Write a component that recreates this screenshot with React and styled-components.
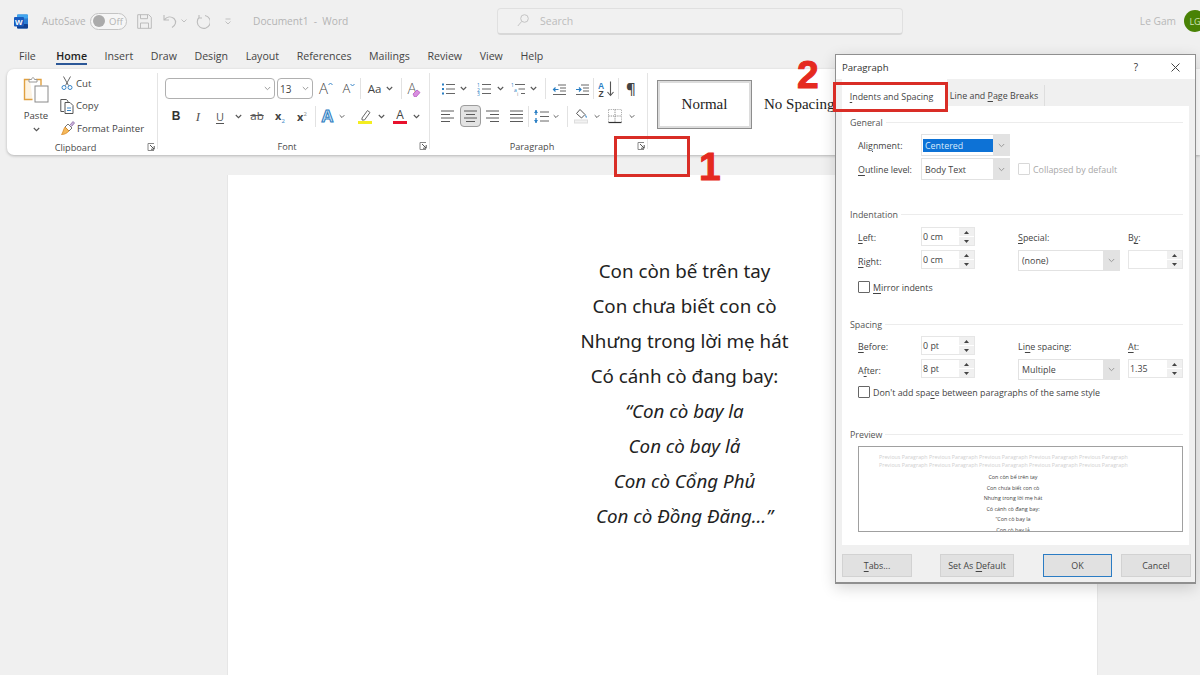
import React from "react";
import styled, { createGlobalStyle } from "styled-components";

const Global = createGlobalStyle`
  html, body { margin: 0; padding: 0; background: #f0f0f0; }
  * { box-sizing: border-box; }
`;

const UI = `"Open Sans", "Noto Sans", sans-serif`;

const Screen = styled.div`
  position: relative; width: 1200px; height: 675px; overflow: hidden;
  background: #f0f0f0; font-family: ${UI}; color: #3a3a3a;
`;

/* ---------- title bar ---------- */
const TitleBar = styled.header`
  display: flex; align-items: center; height: 42px; padding-left: 14px; color: #b4b4b4; font-size: 10px;
`;
const Logo = styled.svg`width: 14px; height: 15px; flex: none;`;
const AutoSave = styled.span`margin-left: 14px; width: 44px; white-space: nowrap;`;
const Toggle = styled.div`
  display: flex; align-items: center; gap: 4px; margin-left: 4px; width: 37px; height: 17px; flex: none;
  border: 1.5px solid #c4c4c4; border-radius: 9px; padding-left: 2px; background: #f6f6f6; font-size: 9.5px; color: #b4b4b4;
`;
const Knob = styled.i`width: 12px; height: 12px; border-radius: 50%; background: #ababab; flex: none;`;
const QIcon = styled.svg`flex: none; margin-left: ${p => p.$ml}px; width: ${p => p.$w}px; height: ${p => p.$h}px;`;
const DocTitle = styled.span`margin-left: 22px; width: 96px; flex: none; font-size: 10.2px; white-space: nowrap;`;
const SearchBox = styled.div`
  display: flex; align-items: center; gap: 11px; margin-left: 148px; width: 406px; height: 27px; flex: none;
  padding-left: 19px; background: #f1f1f1; border: 1px solid #e0e0e0; border-bottom: 2px solid #d8d8d8; border-radius: 4px;
  font-size: 10.5px; color: #bcbcbc;
`;
const UserName = styled.span`margin-left: auto; font-size: 10.2px; color: #b8b8b8;`;
const Avatar = styled.div`
  display: flex; align-items: center; justify-content: center; flex: none;
  width: 22px; height: 22px; margin: 0 -6px 0 8px; border-radius: 50%;
  background: #498205; color: #cfe3b4; font-size: 9px;
`;

/* ---------- tabs ---------- */
const TabBar = styled.nav`
  display: flex; align-items: flex-start; gap: 17.6px; height: 27px; padding: 6px 0 0 19px; font-size: 10.6px; color: #444;
`;
const MenuTab = styled.span`
  height: 17px; line-height: 16px; white-space: nowrap;
  ${p => p.$active && `margin-left: 3px; font-weight: 600; color: #222; border-bottom: 2px solid #2b5797;`}
`;

/* ---------- ribbon ---------- */
const Ribbon = styled.section`
  display: flex; height: 86px; margin-left: 7px; background: #fff; border-radius: 7px 0 0 7px;
  box-shadow: 0 1px 3px rgba(0,0,0,.25);
`;
const Group = styled.div`
  display: flex; flex-direction: column; width: ${p => p.$w}px; flex: none; padding-top: ${p => p.$pt ?? 9}px;
  position: relative;
  &::after { content: ""; position: absolute; right: 0; top: 4px; bottom: 6px; width: 1px; background: #e4e4e4; }
`;
const ToolRow = styled.div`
  display: flex; align-items: center; height: ${p => p.$h || 21}px; padding-left: ${p => p.$pl}px;
  margin-top: ${p => p.$mt || 0}px; flex: none;
`;
const GroupFoot = styled.div`
  display: flex; align-items: center; height: 18px; margin-top: auto; font-size: 9.2px; color: #4a4a4a;
`;
const GroupName = styled.span`flex: 1; text-align: center;`;
const Launcher = styled.svg`width: 14px; height: 8px; flex: none;`;
const Cell = styled.div`
  display: flex; align-items: center; justify-content: center; flex: none;
  width: ${p => p.$w}px; margin-left: ${p => p.$ml || 0}px; height: 100%;
  color: #444; font-size: ${p => p.$fs || 12}px; line-height: 1; white-space: nowrap;
`;
const Pressed = styled(Cell)`
  height: 22px; background: #e3e3e3; border: 1px solid #9c9c9c; border-radius: 4px;
`;
const Sep = styled.i`
  flex: none; width: 1px; height: 21px; background: #e2e2e2;
  margin-left: ${p => p.$ml || 0}px; margin-right: ${p => p.$mr || 0}px;
`;
const Combo = styled.div`
  display: flex; align-items: center; justify-content: space-between; flex: none;
  width: ${p => p.$w}px; height: 21px; margin-left: ${p => p.$ml || 0}px; padding: 0 3px 0 2px;
  border: 1px solid #b0b0b0; border-radius: 4px; font-size: 10px; color: #444;
`;
const ClipBody = styled.div`display: flex; flex: none;`;
const PasteCol = styled.div`
  display: flex; flex-direction: column; align-items: center; width: 50px; margin-left: 4px; padding-top: 4px;
  font-size: 9.6px; color: #444;
`;
const PasteName = styled.span`margin-top: 6px; line-height: 14px;`;
const SmallCol = styled.div`display: flex; flex-direction: column;`;
const SmallBtn = styled.div`
  display: flex; align-items: center; gap: 2px; height: 22.5px; font-size: 9.65px; color: #444; white-space: nowrap;
`;
const SmallIcon = styled.svg`width: 14px; height: 16px; flex: none; margin-left: -1px;`;
const BoldB = styled.b`font-family: "Liberation Sans", sans-serif; font-size: 12px; color: #333;`;
const ItalicI = styled.i`font-family: "Liberation Serif", serif; font-size: 13px; color: #555;`;
const UnderU = styled.span`font-size: 11px; color: #555; text-decoration: underline; text-underline-offset: 2px;`;
const Strike = styled.span`font-size: 11.5px; color: #555; text-decoration: line-through;`;
const Sub = styled.span`font-size: 11px; font-weight: 700; color: #444; position: relative;
  sub, sup { font-size: 6px; color: #3a86c8; font-weight: 400; line-height: 0; }
  sup { color: #888; }
`;
const Big = styled.span`display: flex; align-items: flex-start; font-size: ${p => p.$fs}px; line-height: 1; color: #444; font-weight: 300;
  svg { margin-top: 1px; }
`;
const ColorA = styled.span`
  display: flex; flex-direction: column; align-items: center; width: 14px; font-size: 12px; line-height: 11px; color: #444;
  &::after { content: ""; width: 14px; height: 3px; margin-top: 1px; background: ${p => p.$c}; }
`;
const TextA = styled.span`
  font-family: "Liberation Sans", sans-serif; font-weight: 700; font-size: 17px; line-height: 1;
  color: #cfe5f7; -webkit-text-stroke: 1px #2c7cc0;
`;
const Pilcrow = styled.span`font-size: 15px; font-weight: 600; color: #444;`;
const EraseA = styled.span`font-size: 15px; font-weight: 300; line-height: 1; color: #555; margin-right: -5px;`;
const StyleBody = styled.div`display: flex; align-items: flex-start; padding: 11px 0 0 9px;`;
const StyleCard = styled.div`
  display: flex; align-items: center; justify-content: center; width: 95px; height: 49px; flex: none;
  font-family: "Liberation Serif", serif; font-size: 15px; color: #222;
  border: 1px solid #8d8d8d; box-shadow: inset 0 0 0 2px #dcdcdc;
`;
const StyleName = styled.span`
  margin-left: 12px; line-height: 49px; font-family: "Liberation Serif", serif; font-size: 15px; color: #222; white-space: nowrap;
`;

/* ---------- page ---------- */
const Workspace = styled.main`padding: 20px 0 0 227px;`;
const Sheet = styled.article`
  width: 871px; height: 520px; padding: 78px 0 0 44px; background: #fff; border-left: 1px solid #e6e6e6; border-right: 1px solid #e6e6e6;
  font-family: "Noto Sans", sans-serif; font-size: 18.75px; line-height: 35px; color: #222; text-align: center;
`;
const Verse = styled.div`font-style: ${p => p.$em ? "italic" : "normal"}; white-space: nowrap;`;

/* ---------- dialog ---------- */
const Dialog = styled.aside`
  position: absolute; left: 835px; top: 54px; width: 361px; height: 530px;
  display: flex; flex-direction: column; background: #f0f0f0; border: 1px solid #8f8f8f; border-bottom-width: 2px;
  box-shadow: 0 4px 14px rgba(0,0,0,.16); font-size: 8.9px; color: #444;
`;
const DlgTitle = styled.div`
  display: flex; align-items: center; height: 24px; flex: none; padding-left: 6px; background: #fff; font-size: 9.6px; color: #333;
`;
const DlgHelp = styled.span`margin-left: auto; font-size: 10px; margin-right: 33px;`;
const DlgClose = styled.svg`width: 9px; height: 9px; margin-right: 15px; flex: none;`;
const DlgTabs = styled.div`display: flex; align-items: flex-end; height: 27px; flex: none; padding-left: 6px;`;
const DlgTab = styled.div`
  display: flex; align-items: center; justify-content: center; flex: none; height: ${p => p.$active ? 27 : 21}px; width: ${p => p.$w}px;
  padding: ${p => p.$active ? "7px 6px 0 0" : "0 3px 0 0"};
  background: ${p => p.$active ? "#fff" : "#f0f0f0"}; font-size: 8.9px; color: #444; white-space: nowrap;
  border-right: ${p => p.$active ? "none" : "1px solid #dedede"};
`;
const Panel = styled.div`
  display: flex; flex-direction: column; width: 347px; height: 439px; flex: none; margin-left: 6px; padding: 8px 6px 0 8px; background: #fff;
`;
const Legend = styled.div`
  display: flex; align-items: center; gap: 3px; height: 16px; flex: none; margin-top: ${p => p.$mt || 0}px; font-size: 8.9px; color: #555;
  &::after { content: ""; flex: 1; height: 1px; background: #ececec; }
`;
const FormRow = styled.div`
  display: flex; align-items: center; height: 22px; margin: ${p => p.$mt}px 0 0 8px; flex: none;
`;
const FieldLabel = styled.label`width: ${p => p.$w || 63}px; flex: none; white-space: nowrap;`;
const Key = styled.span`text-decoration: underline; text-underline-offset: 1.5px;`;
const Select = styled.div`
  display: flex; align-items: center; flex: none; width: ${p => p.$w}px; height: ${p => p.$h || 22}px;
  border: 1px solid #e2e2e2; padding-left: 1px; background: #fff; white-space: nowrap;
`;
const SelText = styled.span`
  flex: 1; height: 13px; line-height: 13px; padding-left: 2px;
  ${p => p.$on && `background: #0d72d6; color: #d9ebfb;`}
`;
const SelArrow = styled.span`
  display: flex; align-items: center; justify-content: center; width: 16px; height: 100%; flex: none; background: #e2e2e2;
`;
const Check = styled.i`
  width: 12px; height: 12px; flex: none; border: 1px solid ${p => p.$off ? "#d8d8d8" : "#666"}; border-radius: 1px; background: #fff;
  margin-left: ${p => p.$ml || 0}px; margin-right: 3px;
`;
const Muted = styled.span`color: #a8a8a8; white-space: nowrap;`;
const CheckRow = styled.label`
  display: flex; align-items: center; height: 12px; flex: none; margin: ${p => p.$mt}px 0 0 8px; white-space: nowrap;
`;
const FieldGrid = styled.div`
  display: grid; grid-template-columns: 63px 97px 110px 55px; grid-template-rows: 19px 21px; row-gap: 4px; align-items: center;
  margin: ${p => p.$mt}px 0 0 8px; flex: none;
  label { padding-top: 2px; }
`;
const Spin = styled.div`
  display: flex; align-self: start; width: ${p => p.$w || 54}px; height: 19px; border: 1px solid #e6e6e6; background: #fff;
`;
const SpinText = styled.span`flex: 1; padding-left: 1px; line-height: 18px;`;
const SpinBtns = styled.span`
  display: flex; flex-direction: column; width: 15px; flex: none; background: #f0f0f0;
  i { flex: 1; display: flex; align-items: center; justify-content: center; font-style: normal; }
  i + i { border-top: 1px solid #fff; }
`;
const Tri = styled.svg`width: 5px; height: 3px;`;
const PreviewBox = styled.div`
  height: 86px; margin: 4px 0 0 8px; flex: none; overflow: hidden; padding: 6px 0 0 20px; border: 1px solid #a0a0a0; background: #fff;
`;
const PrevGhost = styled.div`font-size: 5.33px; line-height: 8px; color: #cfcfcf; white-space: nowrap;`;
const PrevLines = styled.div`margin: 3px 0 0 -35px;`;
const PrevLine = styled.div`
  font-size: 5.4px; line-height: 10.5px; color: #444; text-align: center; white-space: nowrap;
`;
const DlgFoot = styled.div`display: flex; padding: 9px 0 0 6px; flex: none;`;
const DlgBtn = styled.button`
  width: ${p => p.$w}px; height: 23px; margin-left: ${p => p.$ml || 0}px; flex: none; padding: 0;
  background: #e1e1e1; border: 1px solid ${p => p.$def ? "#2b7cc4" : "#d2d2d2"};
  font-family: ${UI}; font-size: 8.9px; color: #444;
`;

/* ---------- annotations ---------- */
const RedBox = styled.div`
  position: absolute; left: ${p => p.$x}px; top: ${p => p.$y}px; width: ${p => p.$w}px; height: ${p => p.$h}px;
  border: 3px solid #d92d26;
`;
const Num = styled.span`
  position: absolute; left: ${p => p.$x}px; top: ${p => p.$y}px; font-family: "Liberation Sans", sans-serif;
  font-weight: 700; font-size: 39px; line-height: 39px; color: #e52a20; -webkit-text-stroke: 1px #e52a20;
`;

/* ---------- icons ---------- */
const Chev = ({ w = 10, ml = 0 }) => (
  <Cell $w={w} $ml={ml}>
    <svg width="7" height="5" viewBox="0 0 7 5"><path d="M.8 1l2.7 2.7L6.2 1" fill="none" stroke="#555" strokeWidth="1.1" /></svg>
  </Cell>
);
const L = ({ d, c = "#666", w = 1 }) => <path d={d} fill="none" stroke={c} strokeWidth={w} />;
const Ic = ({ w = 14, h = 14, children }) => <svg width={w} height={h} viewBox={`0 0 ${w} ${h}`}>{children}</svg>;
const Launch = () => (
  <Launcher viewBox="0 0 14 8">
    <L d="M4 .5h6M4 .5v7h6" c="#888" />
    <L d="M6 2l4 4M10.2 3v3.2H7" c="#555" />
  </Launcher>
);
const Bullets = () => (
  <Ic><g fill="#2a7fc4"><rect x="1" y="1.5" width="2" height="2" /><rect x="1" y="6" width="2" height="2" /><rect x="1" y="10.5" width="2" height="2" /></g><L d="M5 2.5h9M5 7h9M5 11.5h9" /></Ic>
);
const Numbers = () => (
  <Ic><text x="0" y="5" fontSize="5" fill="#2a7fc4">1</text><text x="0" y="10" fontSize="5" fill="#2a7fc4">2</text><text x="0" y="14" fontSize="5" fill="#2a7fc4">3</text><L d="M5 2.5h9M5 7h9M5 11.5h9" /></Ic>
);
const Multi = () => (
  <Ic><text x="0" y="5" fontSize="5" fill="#2a7fc4">1</text><text x="3" y="10" fontSize="5" fill="#2a7fc4">a</text><text x="6" y="14" fontSize="5" fill="#888">i</text><L d="M4 2.5h10M7.5 7H14M10 11.5h4" /></Ic>
);
const Indent = ({ flip }) => (
  <Ic><L d="M6 3h8M8 6h6M8 9h6M1 12.5h13" /><L d={flip ? "M1 7.5h5M4 5.5l2 2-2 2" : "M1.5 7.5h5M3.5 5.5l-2 2 2 2"} c="#2a7fc4" w="1.2" /></Ic>
);
const Align = ({ k }) => {
  const rows = { l: ["M1 2h13", "M1 5.5h9", "M1 9h13", "M1 12.5h9"], c: ["M1 2h13", "M3 5.5h9", "M1 9h13", "M3 12.5h9"], r: ["M1 2h13", "M5 5.5h9", "M1 9h13", "M5 12.5h9"], j: ["M1 2h13", "M1 5.5h13", "M1 9h13", "M1 12.5h13"] }[k];
  return <Ic w={15}><L d={rows.join("")} c="#5a5a5a" /></Ic>;
};
const LineSpacing = () => (
  <Ic w={16}><L d="M7 3h9M7 7.5h9M7 12h9" /><L d="M3 1v5M3 9v5" c="#2a7fc4" w="1.3" /><path d="M1 4l2-3 2 3zM1 11l2 3 2-3z" fill="#2a7fc4" /></Ic>
);
const Shading = () => (
  <Ic h={16}><path d="M6 1.5l5 5-3.5 3.5-5-4.5z" fill="#fff" stroke="#555" /><path d="M11.5 6.5c1.2 1.7 1.6 2.6 1 3.2-.8.5-1.3-1-1-3.2z" fill="#2a7fc4" /><rect x=".5" y="12" width="13" height="3" fill="#f2f2f2" stroke="#ddd" /></Ic>
);
const Borders = () => (
  <Ic h={15}><path d="M.5.5h13v13h-13z" fill="none" stroke="#999" strokeWidth=".8" strokeDasharray="1.2 1" /><path d="M7 .5v13M.5 7h13" fill="none" stroke="#777" strokeWidth=".9" strokeDasharray="1.2 1" /><L d="M.5 13.5h13" c="#333" w="1.2" /></Ic>
);
const Sort = () => (
  <svg width="17" height="16" viewBox="0 0 17 16">
    <text x="0" y="7.5" fontSize="8.5" fontWeight="700" fill="#2a7fc4" fontFamily="Liberation Sans">A</text>
    <text x=".5" y="15.5" fontSize="8.5" fontWeight="700" fill="#444" fontFamily="Liberation Sans">Z</text>
    <L d="M12.5 .5v14M9.5 11l3 3.5 3-3.5" c="#555" w="1.1" />
  </svg>
);
const Paste = () => (
  <svg width="26" height="27" viewBox="0 0 26 27">
    <path d="M7 3.5H1.5v20h8" fill="#fdf3e2" stroke="#e0a040" strokeWidth="1.4" />
    <path d="M13 3.5h5v6" fill="none" stroke="#e0a040" strokeWidth="1.4" />
    <path d="M6 5V3.5h2.5C9 1 11 1 11.5 3.5H14V6H6z" fill="#fff" stroke="#999" />
    <rect x="12" y="10" width="13" height="16" fill="#fff" stroke="#8a8a8a" />
  </svg>
);
const Scissors = () => (
  <SmallIcon viewBox="0 0 14 16">
    <L d="M3.5 1.5l5 9M10.5 1.5l-5 9" c="#666" />
    <circle cx="4" cy="12.5" r="2" fill="none" stroke="#3a86c8" /><circle cx="10" cy="12.5" r="2" fill="none" stroke="#3a86c8" />
  </SmallIcon>
);
const CopyIcon = () => (
  <SmallIcon viewBox="0 0 14 16">
    <path d="M4 13.5H.8V1.5h5.5L8 3.2V4" fill="none" stroke="#555" />
    <path d="M5 4.5h5l3 3v8H5z" fill="#fff" stroke="#555" />
    <path d="M7 10h4M7 12.5h4" stroke="#3a86c8" />
  </SmallIcon>
);
const Painter = () => (
  <SmallIcon viewBox="0 0 14 16" style={{ width: 16, marginLeft: -2 }}>
    <path d="M8 4l4 4-3 3-4-4z" fill="#fff" stroke="#777" />
    <path d="M5 7l4 4c-2 2-4 3.5-7.5 3.5C3 13 3 10 5 7z" fill="#f5b95b" stroke="#d98a2a" strokeWidth=".8" />
    <path d="M10 5l3-3.5 1.5 1.5-3 3.5" fill="#cbb2dc" stroke="#8a6aa5" strokeWidth=".8" />
  </SmallIcon>
);
const Pen = () => (
  <svg width="14" height="15" viewBox="0 0 14 15">
    <path d="M4 9l5.5-7.5 2.5 2L6.5 11H4z" fill="#fff" stroke="#666" />
    <rect x="0" y="12" width="14" height="3" fill="#f4ee1f" />
  </svg>
);
const EraserMark = () => (
  <svg width="9" height="9" viewBox="0 0 9 9" style={{ marginTop: 7 }}>
    <path d="M1 6l4-4 3 2.5-4 4.5H2.5z" fill="#d98fe0" stroke="#b55bc0" strokeWidth=".8" />
  </svg>
);
const Tiny = ({ up }) => (
  <svg width="5" height="4" viewBox="0 0 5 4"><path d={up ? "M.5 3l2-2 2 2" : "M.5 1l2 2 2-2"} fill="none" stroke="#3a86c8" /></svg>
);
const Arrow = () => (
  <svg width="7" height="5" viewBox="0 0 7 5"><path d="M.8 1l2.7 2.7L6.2 1" fill="none" stroke="#9a9a9a" /></svg>
);
const Spinner = ({ w, value = "" }) => (
  <Spin $w={w}>
    <SpinText>{value}</SpinText>
    <SpinBtns>
      <i><Tri viewBox="0 0 5 3"><path d="M2.5 0l2.5 3H0z" fill="#444" /></Tri></i>
      <i><Tri viewBox="0 0 5 3"><path d="M2.5 3L5 0H0z" fill="#444" /></Tri></i>
    </SpinBtns>
  </Spin>
);

const menu = ["File", "Home", "Insert", "Draw", "Design", "Layout", "References", "Mailings", "Review", "View", "Help"];
const poem = [
  ["Con còn bế trên tay"], ["Con chưa biết con cò"], ["Nhưng trong lời mẹ hát"], ["Có cánh cò đang bay:"],
  ["“Con cò bay la", 1], ["Con cò bay lả", 1], ["Con cò Cổng Phủ", 1], ["Con cò Đồng Đăng…”", 1],
];
const preview = ["Con còn bế trên tay", "Con chưa biết con cò", "Nhưng trong lời mẹ hát", "Có cánh cò đang bay:", "“Con cò bay la", "Con cò bay lả"];
const ghost = "Previous Paragraph Previous Paragraph Previous Paragraph Previous Paragraph Previous Paragraph";

export default function App() {
  return (
    <Screen>
      <Global />
      <TitleBar>
        <Logo viewBox="0 0 14 15">
          <rect x="3" y="0.5" width="11" height="14" rx="1" fill="#2b7cd3" />
          <rect x="3" y="0.5" width="11" height="4" rx="1" fill="#41a5ee" />
          <rect x="3" y="10" width="11" height="4.5" rx="1" fill="#103f91" />
          <rect x="0" y="3" width="10" height="9.5" rx="1" fill="#185abd" />
          <text x="1" y="10.5" fontSize="8" fontWeight="700" fill="#fff" fontFamily="Liberation Sans">W</text>
        </Logo>
        <AutoSave>AutoSave</AutoSave>
        <Toggle><Knob />Off</Toggle>
        <QIcon $ml={10} $w={15} $h={15} viewBox="0 0 15 15">
          <L d="M.7.7h11l2.6 2.6v11H.7zM3.5.7v4h7v-4M3.5 14.3V9h8v5.3" c="#bcbcbc" />
        </QIcon>
        <QIcon $ml={11} $w={14} $h={15} viewBox="0 0 14 15">
          <L d="M1 1v5h5M1 6c3-3.5 7-4 10-1.5 3 3 1.5 7-2 9" c="#bcbcbc" w="1.1" />
        </QIcon>
        <QIcon $ml={4} $w={6} $h={4} viewBox="0 0 6 4"><L d="M.5.5L3 3 5.5.5" c="#c0c0c0" /></QIcon>
        <QIcon $ml={9} $w={14} $h={15} viewBox="0 0 14 15">
          <L d="M9 1.5A6.5 6.5 0 1 1 3.5 3M3 1v3h3" c="#bcbcbc" w="1.1" />
        </QIcon>
        <QIcon $ml={15} $w={6} $h={7} viewBox="0 0 6 7"><L d="M.5 1h5M.5 3.5L3 6l2.5-2.5" c="#c0c0c0" /></QIcon>
        <DocTitle>Document1 &nbsp;-&nbsp; Word</DocTitle>
        <SearchBox>
          <svg width="12" height="13" viewBox="0 0 12 13"><circle cx="7.5" cy="4.5" r="3.8" fill="none" stroke="#c4c4c4" /><path d="M4.6 7.5L.8 12" stroke="#c4c4c4" /></svg>
          Search
        </SearchBox>
        <UserName>Le Gam</UserName>
        <Avatar>LG</Avatar>
      </TitleBar>

      <TabBar>
        {menu.map(m => <MenuTab key={m} $active={m === "Home"}>{m}</MenuTab>)}
      </TabBar>

      <Ribbon>
        <Group $w={151} $pt={3}>
          <ClipBody>
            <PasteCol>
              <Paste />
              <PasteName>Paste</PasteName>
              <svg width="7" height="5" viewBox="0 0 7 5" style={{ marginTop: 4 }}><path d="M.8 1l2.7 2.7L6.2 1" fill="none" stroke="#555" strokeWidth="1.1" /></svg>
            </PasteCol>
            <SmallCol>
              <SmallBtn><Scissors />Cut</SmallBtn>
              <SmallBtn><CopyIcon />Copy</SmallBtn>
              <SmallBtn><Painter />Format Painter</SmallBtn>
            </SmallCol>
          </ClipBody>
          <GroupFoot><GroupName>Clipboard</GroupName><Launch /></GroupFoot>
        </Group>

        <Group $w={272}>
          <ToolRow $pl={7}>
            <Combo $w={110}><span /><Arrow /></Combo>
            <Combo $w={36} $ml={2}>13<Arrow /></Combo>
            <Cell $w={26} $fs={15}><Big $fs={15}>A<Tiny up /></Big></Cell>
            <Cell $w={20}><Big $fs={13}>A<Tiny /></Big></Cell>
            <Sep $ml={1} $mr={2} />
            <Cell $w={23} $fs={11.5}>Aa</Cell>
            <Chev w={7} />
            <Sep $ml={8} $mr={3} />
            <Cell $w={18}><EraseA>A</EraseA><EraserMark /></Cell>
          </ToolRow>
          <ToolRow $pl={7} $h={22} $mt={6}>
            <Cell $w={22}><BoldB>B</BoldB></Cell>
            <Cell $w={22}><ItalicI>I</ItalicI></Cell>
            <Cell $w={22}><UnderU>U</UnderU></Cell>
            <Chev w={14} />
            <Cell $w={24}><Strike>ab</Strike></Cell>
            <Cell $w={22}><Sub>x<sub>2</sub></Sub></Cell>
            <Cell $w={22}><Sub>x<sup>2</sup></Sub></Cell>
            <Sep $ml={2} />
            <Cell $w={23}><TextA>A</TextA></Cell>
            <Chev w={6} />
            <Cell $w={26} $ml={7}><Pen /></Cell>
            <Chev w={7} />
            <Cell $w={24} $ml={3}><ColorA $c="#e8112d">A</ColorA></Cell>
            <Chev w={8} />
          </ToolRow>
          <GroupFoot><GroupName>Font</GroupName><Launch /></GroupFoot>
        </Group>

        <Group $w={218}>
          <ToolRow $pl={7}>
            <Cell $w={21}><Bullets /></Cell>
            <Chev w={10} />
            <Cell $w={21} $ml={5}><Numbers /></Cell>
            <Chev w={12} />
            <Cell $w={20} $ml={2}><Multi /></Cell>
            <Chev w={10} />
            <Sep $ml={7} />
            <Cell $w={25}><Indent /></Cell>
            <Cell $w={21}><Indent flip /></Cell>
            <Sep $ml={1} />
            <Cell $w={24}><Sort /></Cell>
            <Sep />
            <Cell $w={24}><Pilcrow>¶</Pilcrow></Cell>
          </ToolRow>
          <ToolRow $pl={7} $h={22} $mt={6}>
            <Cell $w={21}><Align k="l" /></Cell>
            <Pressed $w={21} $ml={2}><Align k="c" /></Pressed>
            <Cell $w={23}><Align k="r" /></Cell>
            <Cell $w={24}><Align k="j" /></Cell>
            <Sep />
            <Cell $w={24}><LineSpacing /></Cell>
            <Chev w={6} />
            <Sep $ml={8} />
            <Cell $w={26}><Shading /></Cell>
            <Chev w={6} />
            <Cell $w={28} $ml={1}><Borders /></Cell>
            <Chev w={6} />
          </ToolRow>
          <GroupFoot><GroupName>Paragraph</GroupName><Launch /></GroupFoot>
        </Group>

        <StyleBody>
          <StyleCard>Normal</StyleCard>
          <StyleName>No Spacing</StyleName>
        </StyleBody>
      </Ribbon>

      <Workspace>
        <Sheet>
          {poem.map(([t, em]) => <Verse key={t} $em={em}>{t}</Verse>)}
        </Sheet>
      </Workspace>

      <Dialog>
        <DlgTitle>
          Paragraph
          <DlgHelp>?</DlgHelp>
          <DlgClose viewBox="0 0 9 9"><L d="M.5.5l8 8M8.5.5l-8 8" c="#444" /></DlgClose>
        </DlgTitle>
        <DlgTabs>
          <DlgTab $active $w={105}><span><Key>I</Key>ndents and Spacing</span></DlgTab>
          <DlgTab $w={98}><span>Line and <Key>P</Key>age Breaks</span></DlgTab>
        </DlgTabs>
        <Panel>
          <Legend>General</Legend>
          <FormRow $mt={4}>
            <FieldLabel>Ali<Key>g</Key>nment:</FieldLabel>
            <Select $w={89}><SelText $on>Centered</SelText><SelArrow><Arrow /></SelArrow></Select>
          </FormRow>
          <FormRow $mt={2}>
            <FieldLabel><Key>O</Key>utline level:</FieldLabel>
            <Select $w={89}><SelText>Body Text</SelText><SelArrow><Arrow /></SelArrow></Select>
            <Check $off $ml={8} />
            <Muted>Collapsed by default</Muted>
          </FormRow>

          <Legend $mt={26}>Indentation</Legend>
          <FieldGrid $mt={5}>
            <FieldLabel><Key>L</Key>eft:</FieldLabel>
            <Spinner value="0 cm" />
            <FieldLabel><Key>S</Key>pecial:</FieldLabel>
            <FieldLabel>B<Key>y</Key>:</FieldLabel>
            <FieldLabel><Key>R</Key>ight:</FieldLabel>
            <Spinner value="0 cm" />
            <Select $w={102} $h={21}><SelText>(none)</SelText><SelArrow><Arrow /></SelArrow></Select>
            <Spinner w={55} />
          </FieldGrid>
          <CheckRow $mt={10}><Check /><span><Key>M</Key>irror indents</span></CheckRow>

          <Legend $mt={23}>Spacing</Legend>
          <FieldGrid $mt={4}>
            <FieldLabel><Key>B</Key>efore:</FieldLabel>
            <Spinner value="0 pt" />
            <FieldLabel>Li<Key>n</Key>e spacing:</FieldLabel>
            <FieldLabel><Key>A</Key>t:</FieldLabel>
            <FieldLabel>A<Key>f</Key>ter:</FieldLabel>
            <Spinner value="8 pt" />
            <Select $w={102} $h={21}><SelText>Multiple</SelText><SelArrow><Arrow /></SelArrow></Select>
            <Spinner w={55} value="1.35" />
          </FieldGrid>
          <CheckRow $mt={6}><Check /><span>Don't add spa<Key>c</Key>e between paragraphs of the same style</span></CheckRow>

          <Legend $mt={28}>Preview</Legend>
          <PreviewBox>
            <PrevGhost>{ghost}</PrevGhost>
            <PrevGhost>{ghost}</PrevGhost>
            <PrevLines>
              {preview.map(t => <PrevLine key={t}>{t}</PrevLine>)}
            </PrevLines>
          </PreviewBox>
        </Panel>
        <DlgFoot>
          <DlgBtn $w={70}><Key>T</Key>abs...</DlgBtn>
          <DlgBtn $w={74} $ml={28}>Set As <Key>D</Key>efault</DlgBtn>
          <DlgBtn $w={69} $ml={29} $def>OK</DlgBtn>
          <DlgBtn $w={70} $ml={9}>Cancel</DlgBtn>
        </DlgFoot>
      </Dialog>

      <RedBox $x={614} $y={136} $w={76} $h={41} />
      <RedBox $x={833} $y={82} $w={115} $h={30} />
      <Num $x={699} $y={147}>1</Num>
      <Num $x={797} $y={55}>2</Num>
    </Screen>
  );
}
